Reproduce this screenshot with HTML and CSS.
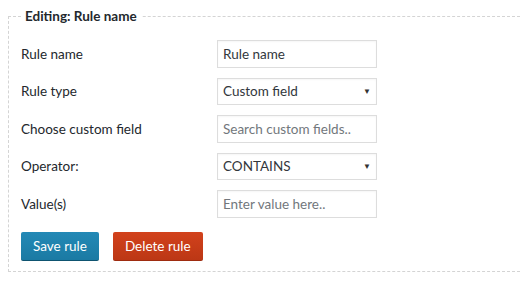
FILE: index.html
```html
<!DOCTYPE html>
<html lang="en">
<head>
    <meta charset="UTF-8">
    <title>Edit rule</title>
    <link rel="stylesheet" href="styles.css">
</head>
<body>
    <fieldset class="rule-box">
        <legend>Editing: Rule name</legend>
        <div class="rule-grid">
            <label for="rule-name">Rule name</label>
            <input type="text" id="rule-name" value="Rule name">

            <label for="rule-type">Rule type</label>
            <div class="select-wrap">
                <select id="rule-type">
                    <option>Custom field</option>
                </select>
            </div>

            <label for="custom-field">Choose custom field</label>
            <input type="text" id="custom-field" placeholder="Search custom fields..">

            <label for="operator">Operator:</label>
            <div class="select-wrap">
                <select id="operator">
                    <option>CONTAINS</option>
                </select>
            </div>

            <label for="values">Value(s)</label>
            <input type="text" id="values" placeholder="Enter value here..">
        </div>
        <div class="actions">
            <button type="button" class="btn btn-save">Save rule</button>
            <button type="button" class="btn btn-delete">Delete rule</button>
        </div>
    </fieldset>
</body>
</html>
```

FILE: styles.css
```css
    html {
        overflow: hidden;
    }

    body {
        font-family: Lato, "Liberation Sans", sans-serif;
        font-size: 13.5px;
        color: #23282d;
        background: #fff;
        margin: 8px 0 8px 8px;
    }

    /* the box runs on past the right edge of the window */
    .rule-box {
        margin: 0;
        padding: 16px 12px 10px 12px;
        border: 1px dashed #d4d4d4;
        border-right: none;
    }

    .rule-box legend {
        padding: 0 4px;
        font-weight: bold;
        font-size: 13.5px;
        color: #23282d;
    }

    .rule-grid {
        display: grid;
        grid-template-columns: 196px 160px;
        row-gap: 10px;
        align-items: center;
    }

    .rule-grid input[type="text"],
    .rule-grid select {
        box-sizing: border-box;
        width: 160px;
        height: 27.5px;
        margin: 0;
        padding: 0 5px;
        border: 1px solid #ddd;
        border-radius: 0;
        background: #fff;
        font-family: Lato, "Liberation Sans", sans-serif;
        font-size: 13.5px;
        color: #32373c;
        outline: none;
        box-shadow: inset 0 1px 2px rgba(0, 0, 0, 0.04);
    }

    .rule-grid input::placeholder {
        color: #72777c;
    }

    .select-wrap {
        position: relative;
        width: 160px;
    }

    .select-wrap select {
        appearance: none;
        -webkit-appearance: none;
    }

    .select-wrap::after {
        content: "\25BC";
        position: absolute;
        right: 6px;
        top: 8px;
        font-size: 8px;
        color: #333;
        pointer-events: none;
    }

    .actions {
        display: flex;
        gap: 14px;
        margin-top: 14px;
    }

    .btn {
        height: 29px;
        padding: 0 12px;
        border: none;
        border-radius: 2px;
        font-family: Lato, "Liberation Sans", sans-serif;
        font-size: 13.5px;
        color: #fff;
        cursor: pointer;
    }

    .btn-save {
        background: linear-gradient(#2389b6, #1b7aa3);
        border-bottom: 1px solid #0e5370;
    }

    .btn-delete {
        background: linear-gradient(#d2421c, #bc3715);
        border-bottom: 1px solid #9e2c10;
    }
```
